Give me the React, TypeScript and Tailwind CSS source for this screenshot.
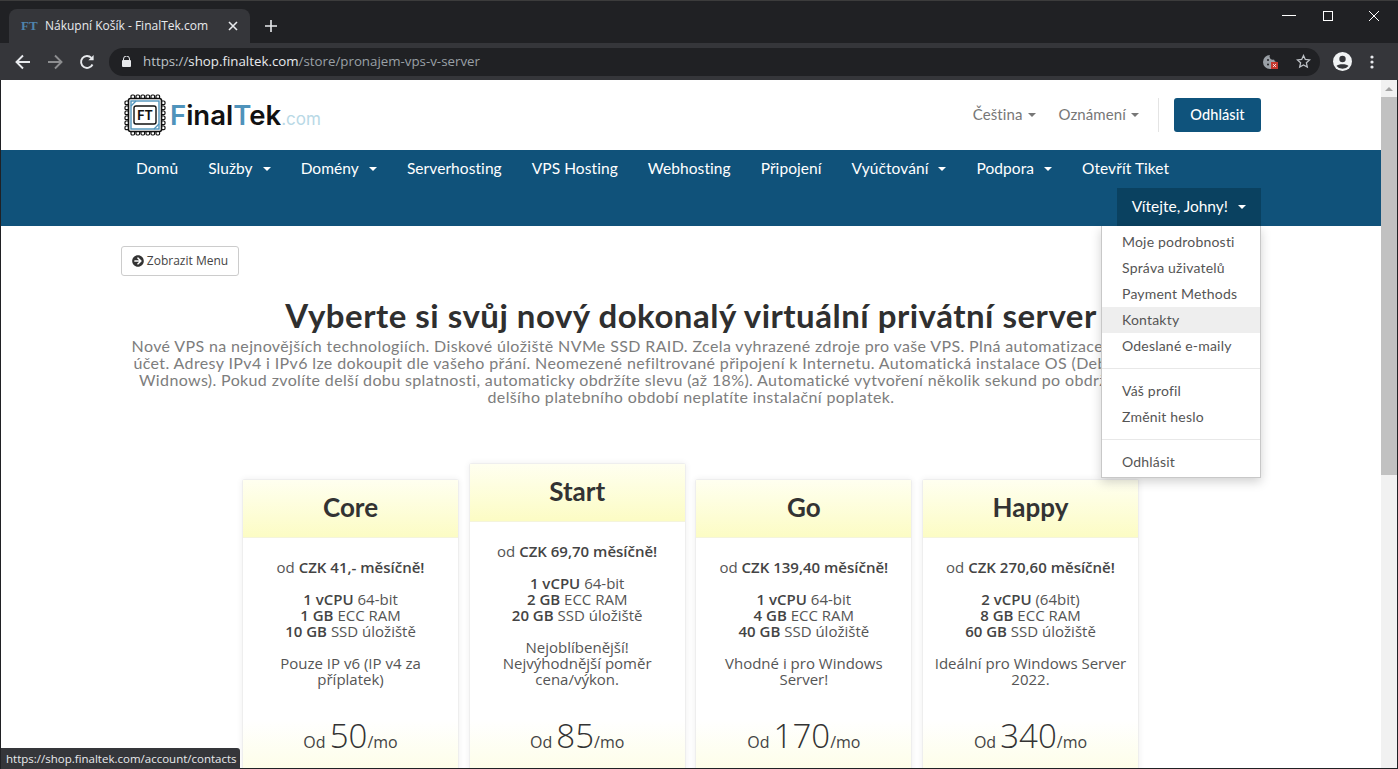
import React from 'react';
import { FaArrowCircleRight } from 'react-icons/fa';

const navFont = { fontFamily: 'Lato, sans-serif' };

const Caret = ({ className = '' }: { className?: string }) => (
  <span className={`inline-block w-0 h-0 border-x-4 border-x-transparent border-t-4 ${className}`} />
);

const ChipLogo = () => (
  <svg width="42" height="42" viewBox="0 0 42 42" fill="none">
    {[8, 13, 18, 23, 28, 33].map((p) => (
      <g key={p} stroke="#111" strokeWidth="1.2" fill="#fff">
        <rect x={p - 1} y="1" width="3.6" height="4" rx="1.2" />
        <rect x={p - 1} y="37" width="3.6" height="4" rx="1.2" />
        <rect x="1" y={p - 1} width="4" height="3.6" rx="1.2" />
        <rect x="37" y={p - 1} width="4" height="3.6" rx="1.2" />
      </g>
    ))}
    <rect x="4.5" y="4.5" width="33" height="33" rx="2" fill="#fff" stroke="#111" strokeWidth="1.6" />
    <rect x="7" y="7" width="28" height="28" fill="#fff" stroke="#4f93bb" strokeWidth="1.4" />
    <path d="M7 12L12 7M30 35L35 30" stroke="#4f93bb" strokeWidth="1.4" />
    <rect x="10" y="12" width="22" height="18" rx="2" fill="#fff" stroke="#111" strokeWidth="1.4" />
    <text x="21" y="25.5" textAnchor="middle" fontSize="12.5" fontWeight="700" fill="#111" fontFamily="Inter, sans-serif">FT</text>
  </svg>
);

const TabBar = () => (
  <div className="h-[43px] bg-[#202124] flex items-end pl-[9px] relative border-t border-[#3c3c3c]">
    <div className="w-[241px] h-[34px] bg-[#35363a] rounded-t-lg flex items-center pl-[12px] pr-[12px] text-[12px] text-[#e8eaed]">
      <span className="font-bold text-[13px] text-[#4f84ad] mr-[8px] w-[16px]" style={{ fontFamily: '"Liberation Serif", serif' }}>FT</span>
      <span className="flex-1 whitespace-nowrap">Nákupní Košík - FinalTek.com</span>
      <svg width="10" height="10" viewBox="0 0 10 10" stroke="#e8eaed" strokeWidth="1.6"><path d="M1 1L9 9M9 1L1 9" /></svg>
    </div>
    <svg className="ml-[15px] mb-[11px]" width="12" height="12" viewBox="0 0 12 12" stroke="#e8eaed" strokeWidth="1.6"><path d="M6 0V12M0 6H12" /></svg>
    <div className="ml-auto flex items-center h-[29px] self-start text-white">
      <svg className="mr-[27px]" width="14" height="11" viewBox="0 0 14 11" stroke="#fff"><path d="M0 5.5H14" /></svg>
      <svg className="mr-[36px]" width="10" height="10" viewBox="0 0 10 10" stroke="#fff" fill="none"><rect x=".5" y=".5" width="9" height="9" /></svg>
      <svg className="mr-[19px]" width="10" height="10" viewBox="0 0 10 10" stroke="#fff"><path d="M0 0L10 10M10 0L0 10" /></svg>
    </div>
  </div>
);

const Toolbar = () => (
  <div className="h-[37px] bg-[#35363a] flex items-center pl-[15px] pr-[15px]">
    <svg width="16" height="16" viewBox="0 0 16 16" stroke="#e8eaed" strokeWidth="1.9" fill="none"><path d="M15 8H2M8 1.5L1.5 8L8 14.5" /></svg>
    <svg className="ml-[16px]" width="16" height="16" viewBox="0 0 16 16" stroke="#8d8e90" strokeWidth="1.9" fill="none"><path d="M1 8H14M8 1.5L14.5 8L8 14.5" /></svg>
    <svg className="ml-[16px]" width="16" height="16" viewBox="0 0 16 16" stroke="#e8eaed" strokeWidth="1.9" fill="none"><path d="M13.5 10.5A6 6 0 1 1 12.4 3.8" /><path d="M14.6 1V6.2H9.4Z" fill="#e8eaed" stroke="none" /></svg>
    <div className="ml-[14px] w-[1211px] h-[28px] rounded-full bg-[#202124] flex items-center pl-[13px] text-[13.3px]">
      <svg width="9" height="11" viewBox="0 0 9 11"><path d="M1.5 4.5V3a3 3 0 0 1 6 0v1.500" stroke="#e8eaed" strokeWidth="1" fill="none" /><rect y="4" width="9" height="7" rx="1" fill="#e8eaed" /></svg>
      <span className="ml-[12px] whitespace-nowrap" style={{ fontFamily: '"Open Sans", sans-serif' }}>
        <span className="text-[#bdc1c6]">https://</span>
        <span className="text-[#e8eaed]">shop.finaltek.com</span>
        <span className="text-[#9aa0a6]">/store/pronajem-vps-v-server</span>
      </span>
      <div className="ml-auto flex items-center pr-[9px]">
        <svg width="16" height="16" viewBox="0 0 16 16">
          <path d="M7 1a7 7 0 1 0 7 7 3 3 0 0 1-3-2.500A3.200 3.200 0 0 1 7 1Z" fill="#9aa0a6" />
          <circle cx="5" cy="6" r="1" fill="#202124" /><circle cx="5" cy="10.500" r="1" fill="#202124" /><circle cx="9" cy="9" r="1" fill="#202124" />
          <rect x="8" y="8" width="7" height="7" fill="#c5392f" />
          <path d="M10 10L13 13M13 10L10 13" stroke="#fff" strokeWidth="0.8" />
        </svg>
        <svg className="ml-[17px]" width="15" height="15" viewBox="0 0 15 15" fill="none" stroke="#bdc1c6" strokeWidth="1.3"><path d="M7.500 1.500L9.300 5.400L13.600 5.900L10.400 8.800L11.300 13L7.500 10.900L3.700 13L4.600 8.800L1.400 5.900L5.700 5.400Z" /></svg>
      </div>
    </div>
    <svg className="ml-[13px]" width="19" height="19" viewBox="0 0 19 19"><circle cx="9.500" cy="9.500" r="9.500" fill="#f1f3f4" /><circle cx="9.500" cy="7" r="3.200" fill="#35363a" /><path d="M3.500 14c1.500-2.500 10.500-2.500 12 0a7.700 7.700 0 0 1-12 0Z" fill="#35363a" /></svg>
    <svg className="ml-[18px]" width="4" height="14" viewBox="0 0 4 14" fill="#e8eaed"><circle cx="2" cy="2" r="1.600" /><circle cx="2" cy="7" r="1.600" /><circle cx="2" cy="12" r="1.600" /></svg>
  </div>
);

const NavItem = ({ label, caret, small }: { label: string; caret?: boolean; small?: boolean }) => (
  <a className={`h-[38px] px-[15px] pb-[1px] flex items-center whitespace-nowrap text-white text-[15.5px] ${small ? '' : 'tracking-[0.07px]'}`}>
    {label}
    {caret && <Caret className="ml-[10px] mt-[1px] border-t-white" />}
  </a>
);

const menuGroups = [
  ['Moje podrobnosti', 'Správa uživatelů', 'Payment Methods', 'Kontakty', 'Odeslané e-maily'],
  ['Váš profil', 'Změnit heslo'],
  ['Odhlásit'],
];

const UserMenu = () => (
  <div className="absolute top-full right-0 w-[160px] h-[252px] bg-white border border-[#c8c8c8] border-t-0 shadow-[0_4px_10px_rgba(0,0,0,0.18)] pt-[3px] text-[14px] text-[#555] z-10">
    {menuGroups.map((items, i) => (
      <div key={i}>
        {i > 0 && <div className="h-px bg-[#e8e8e8] my-[9px]" />}
        {items.map((item) => (
          <div key={item} className={`h-[26px] px-[20px] pb-[2px] flex items-center tracking-[0.2px] ${item === 'Kontakty' ? 'bg-[#eeeeee]' : ''}`}>{item}</div>
        ))}
      </div>
    ))}
  </div>
);

const plans = [
  { name: 'Core', price: 'od', czk: 'CZK 41,- měsíčně!', specs: [['1 vCPU', ' 64-bit'], ['1 GB', ' ECC RAM'], ['10 GB', ' SSD úložiště']], note: 'Pouze IP v6 (IP v4 za příplatek)', mo: '50' },
  { name: 'Start', price: 'od', czk: 'CZK 69,70 měsíčně!', specs: [['1 vCPU', ' 64-bit'], ['2 GB', ' ECC RAM'], ['20 GB', ' SSD úložiště']], note: 'Nejoblíbenější! Nejvýhodnější poměr cena/výkon.', mo: '85', raised: true },
  { name: 'Go', price: 'od', czk: 'CZK 139,40 měsíčně!', specs: [['1 vCPU', ' 64-bit'], ['4 GB', ' ECC RAM'], ['40 GB', ' SSD úložiště']], note: 'Vhodné i pro Windows Server!', mo: '170' },
  { name: 'Happy', price: 'od', czk: 'CZK 270,60 měsíčně!', specs: [['2 vCPU', ' (64bit)'], ['8 GB', ' ECC RAM'], ['60 GB', ' SSD úložiště']], note: 'Ideální pro Windows Server 2022.', mo: '340' },
];

const PlanCard = ({ plan }: { plan: (typeof plans)[number] }) => (
  <div className={`w-[217px] bg-white border-x border-t border-[#eeeeee] rounded-t-[3px] shadow-[0_0_6px_rgba(0,0,0,0.07)] ${plan.raised ? '-mt-[16px]' : ''}`}>
    <div className="h-[58px] pb-[2px] bg-gradient-to-b from-[#fffff0] to-[#fcfcc4] flex items-center justify-center text-[26px] font-bold text-[#333] border-b border-[#f4f4dc]" style={navFont}>
      {plan.name}
    </div>
    <div className={`${plan.raised ? 'h-[198px]' : 'h-[182px]'} px-[10px] pt-[21px] text-center text-[15px] leading-[16px] text-[#555]`}>
      <p>{plan.price} <b className="font-semibold text-[#444]">{plan.czk}</b></p>
      <div className="mt-[16px]">
        {plan.specs.map(([bold, rest]) => (
          <p key={bold}><b className="font-semibold text-[#444]">{bold}</b>{rest}</p>
        ))}
      </div>
      <p className="mt-[16px]">{plan.note}</p>
    </div>
    <div className="h-[100px] bg-gradient-to-b from-white to-[#fcfcd0] flex justify-center items-baseline text-[#444] text-[16px]">
      <span>Od&nbsp;</span><span className="text-[33px] leading-[32px] font-light text-[#333]">{plan.mo}</span><span>/mo</span>
    </div>
  </div>
);

export default function App() {
  return (
    <div className="w-[1398px] h-[769px] overflow-hidden flex flex-col bg-[#202124] relative" style={{ fontFamily: '"Open Sans", sans-serif' }}>
      <TabBar />
      <Toolbar />
      <div className="flex-1 min-h-0 flex mx-px mb-px bg-white">
        <div className="flex-1 min-w-0 h-full overflow-hidden">
          <div className="w-[1140px] mx-auto h-[70px] flex items-center justify-between" style={navFont}>
            <div className="flex items-center ml-[3px]">
              <ChipLogo />
              <div className="ml-[4px] mt-[2px] whitespace-nowrap text-[27.500px] leading-none text-[#111]" style={{ fontFamily: 'Inter, sans-serif', fontWeight: 600 }}>
                <span className="text-[#4f93bb]">F</span>inal<span className="text-[#4f93bb]">T</span>ek
                <span className="text-[17px] font-normal text-[#b9d9e6]">.com</span>
              </div>
            </div>
            <div className="flex items-center text-[15px] text-[#777] tracking-[0.1px]">
              <span className="pb-[2px]">Čeština</span><Caret className="ml-[5px] border-t-[#777]" />
              <span className="ml-[23px] pb-[2px]">Oznámení</span><Caret className="ml-[5px] border-t-[#777]" />
              <div className="w-px h-[34px] bg-[#e4e4e4] ml-[19px] mr-[15px]" />
              <button className="w-[87px] h-[34px] rounded-[3px] bg-[#0f537c] text-white text-[14.500px] font-medium">Odhlásit</button>
            </div>
          </div>
          <nav className="h-[76px] bg-[#10527a]" style={navFont}>
            <div className="w-[1140px] mx-auto">
              <div className="flex">
                <NavItem label="Domů" />
                <NavItem label="Služby" caret />
                <NavItem label="Domény" caret />
                <NavItem label="Serverhosting" />
                <NavItem label="VPS Hosting" />
                <NavItem label="Webhosting" />
                <NavItem label="Připojení" />
                <NavItem label="Vyúčtování" caret />
                <NavItem label="Podpora" caret />
                <NavItem label="Otevřít Tiket" />
              </div>
              <div className="flex justify-end">
                <div className="relative bg-[#0a4160]">
                  <NavItem label="Vítejte, Johny!" caret small />
                  <UserMenu />
                </div>
              </div>
            </div>
          </nav>
          <div className="w-[1140px] mx-auto pt-[20px]">
            <button className="h-[30px] w-[118px] rounded-[3px] border border-[#cccccc] flex items-center justify-center gap-[3px] text-[12px] text-[#444]">
              <FaArrowCircleRight className="text-[12px] text-[#333]" /> Zobrazit Menu
            </button>
            <h1 className="mt-[19px] text-center text-[33px] leading-[40px] font-bold text-[#2f2f2f] tracking-[0.5px] whitespace-nowrap" style={navFont}>
              Vyberte si svůj nový dokonalý virtuální privátní server
            </h1>
            <p className="mt-[2px] text-center text-[16px] leading-[17px] text-[#7d7d7d] whitespace-nowrap tracking-[0.37px]" style={navFont}>
              Nové VPS na nejnovějších technologiích. Diskové úložiště NVMe SSD RAID. Zcela vyhrazené zdroje pro vaše VPS. Plná automatizace přes váš zákaznický<br />
              účet. Adresy IPv4 i IPv6 lze dokoupit dle vašeho přání. Neomezené nefiltrované připojení k Internetu. Automatická instalace OS (Debian, Ubuntu, Rocky,<br />
              Widnows). Pokud zvolíte delší dobu splatnosti, automaticky obdržíte slevu (až 18%). Automatické vytvoření několik sekund po obdržení platby. U volby<br />
              delšího platebního období neplatíte instalační poplatek.
            </p>
            <div className="mt-[74px] flex justify-center gap-[9.67px] pr-px">
              {plans.map((plan) => <PlanCard key={plan.name} plan={plan} />)}
            </div>
          </div>
        </div>
        <div className="w-[16px] h-full bg-[#f1f1f1] flex flex-col items-center">
          <div className="h-[17px] flex items-center"><Caret className="rotate-180 border-t-[#a3a3a3]" /></div>
          <div className="w-full h-[378px] bg-[#c1c1c1]" />
        </div>
      </div>
      <div className="absolute left-px bottom-0 w-[239px] h-[21px] bg-[#35363a] rounded-tr-[3px] pl-[5px] flex items-center text-[11.500px] text-[#e8eaed] whitespace-nowrap overflow-hidden">
        https://shop.finaltek.com/account/contacts
      </div>
    </div>
  );
}
